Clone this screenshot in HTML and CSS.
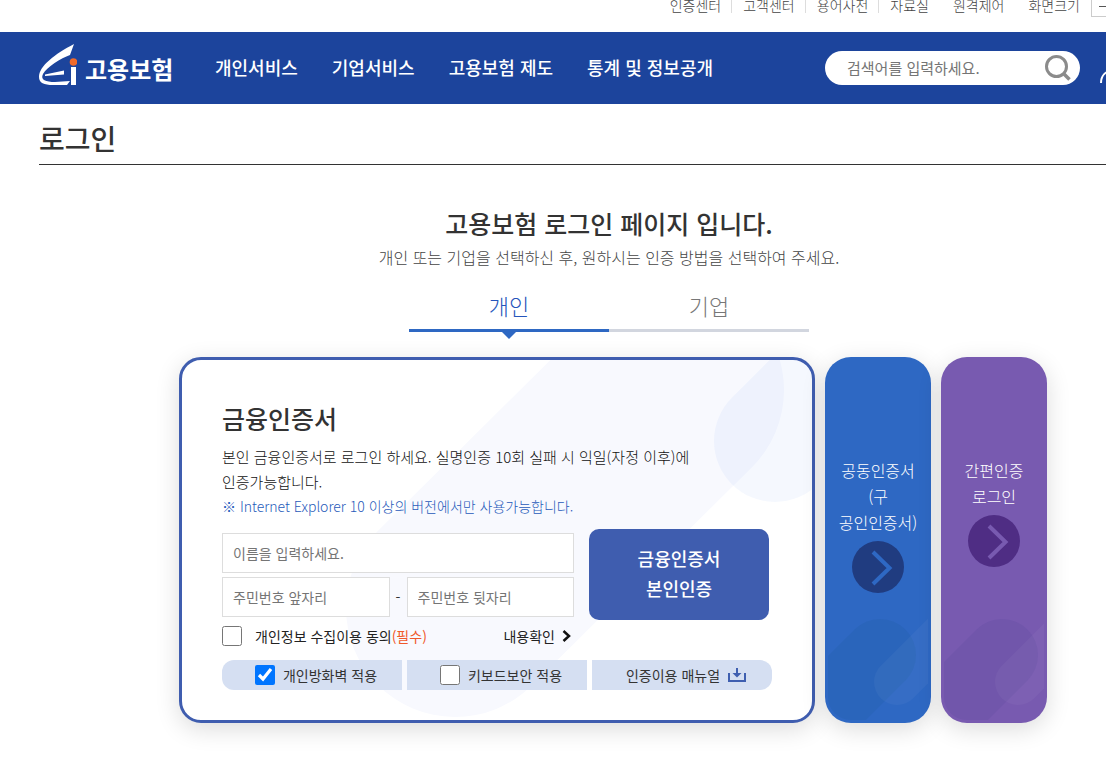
FILE: index.html
```
<!doctype html>
<html lang="ko">

<head>
	<meta charset="UTF-8">
	<title>로그인 - 고용보험</title>
	<link rel="stylesheet" href="styles.css">
</head>

<body>
	<div class="util">
		<div class="inner">
			<ul class="util_list">
				<li><a href="#">인증센터</a></li>
				<li><a href="#">고객센터</a></li>
				<li><a href="#">용어사전</a></li>
				<li><a href="#">자료실</a></li>
			</ul>
			<a href="#" class="remote">원격제어</a>
			<span class="size_label">화면크기</span>
			<button type="button" class="size_btn" aria-label="축소">
				<svg width="10" height="10" viewBox="0 0 10 10"><path d="M1 5.500h8" stroke="#555" /></svg>
			</button>
		</div>
	</div>

	<header class="header">
		<div class="inner">
			<a href="#" class="logo">
				<svg width="38" height="42" viewBox="0 0 38 42" aria-hidden="true">
					<path fill="#fff" d="M35 0L31 11C22 14 8 23 4 30C1 36 7 38 16 38L31 37L28 41L14 41C5 41 0 39 0 33C0 22 16 10 35 0Z" />
					<path fill="#fff" d="M6 30.500L25 26.500V30.500L6 32Z" />
					<path fill="#fff" d="M32 23h5v18h-5z" />
					<circle cx="34.500" cy="18" r="3.800" fill="#f06a2a" />
				</svg>
				<span>고용보험</span>
			</a>
			<nav class="gnb">
				<a href="#">개인서비스</a>
				<a href="#">기업서비스</a>
				<a href="#">고용보험 제도</a>
				<a href="#">통계 및 정보공개</a>
			</nav>
			<form class="search">
				<input type="text" placeholder="검색어를 입력하세요." aria-label="검색어">
				<button type="submit" aria-label="검색">
					<svg width="26" height="26" viewBox="0 0 26 26" fill="none" stroke="#8b8b8b">
						<circle cx="11.500" cy="11.500" r="10" stroke-width="3" />
						<path d="M18.500 18.500L24.500 24.500" stroke-width="3.500" />
					</svg>
				</button>
			</form>
			<a href="#" class="user" aria-label="로그인">
				<svg width="26" height="26" viewBox="0 0 26 26" fill="none" stroke="#fff" stroke-width="2">
					<circle cx="13" cy="6" r="5" />
					<path d="M1 25C1 18 5 13 13 13S25 18 25 25" />
				</svg>
			</a>
		</div>
	</header>

	<main class="inner">
		<h1>로그인</h1>
		<div class="intro">
			<h2>고용보험 로그인 페이지 입니다.</h2>
			<p>개인 또는 기업을 선택하신 후, 원하시는 인증 방법을 선택하여 주세요.</p>
		</div>
		<div class="tabs">
			<button type="button" class="tab on">개인</button>
			<button type="button" class="tab">기업</button>
		</div>

		<div class="login">
			<section class="card">
				<svg class="card_bg" viewBox="0 0 630 360" preserveAspectRatio="xMinYMin slice" fill="none" stroke-linecap="round" aria-hidden="true">
					<path d="M273 248L493 30" stroke="#f8f9fe" stroke-width="218" />
					<path d="M593 81L793 -119" stroke="#5a8cf0" stroke-opacity=".06" stroke-width="122" />
				</svg>
				<h3>금융인증서</h3>
				<p class="desc">본인 금융인증서로 로그인 하세요. 실명인증 10회 실패 시 익일(자정 이후)에<br>인증가능합니다.</p>
				<p class="notice">※ Internet Explorer 10 이상의 버전에서만 사용가능합니다.</p>
				<form>
					<div class="fields">
						<div class="inputs">
							<input type="text" placeholder="이름을 입력하세요." aria-label="이름">
							<div class="jumin">
								<input type="text" placeholder="주민번호 앞자리" aria-label="주민번호 앞자리">
								<span>-</span>
								<input type="password" placeholder="주민번호 뒷자리" aria-label="주민번호 뒷자리">
							</div>
						</div>
						<button type="submit" class="cert_btn">금융인증서<br>본인인증</button>
					</div>
					<div class="agree">
						<input type="checkbox" id="agree">
						<label for="agree">개인정보 수집이용 동의<em>(필수)</em></label>
						<a href="#">내용확인
							<svg width="10" height="12" viewBox="0 0 10 12"><path d="M1.500 1L7 6L1.500 11" fill="none" stroke="#111" stroke-width="2.500" /></svg>
						</a>
					</div>
					<div class="options">
						<div class="option">
							<input type="checkbox" id="firewall" checked>
							<label for="firewall">개인방화벽 적용</label>
						</div>
						<div class="option">
							<input type="checkbox" id="keyboard">
							<label for="keyboard">키보드보안 적용</label>
						</div>
						<a href="#" class="option">인증이용 매뉴얼
							<svg width="18" height="14" viewBox="0 0 18 14"><path d="M1 5v8h16V5M9 0v7" fill="none" stroke="#3f5fb0" stroke-width="2" /><path d="M4.500 5h9L9 9.500z" fill="#3f5fb0" /></svg>
						</a>
					</div>
				</form>
			</section>

			<button type="button" class="side blue">
				<svg class="side_bg" width="100" height="110" viewBox="0 0 100 110" fill="none" stroke-linecap="round" aria-hidden="true">
					<path d="M52 45L-48 145" stroke="#1f5a9a" stroke-opacity=".2" stroke-width="72" />
					<path d="M69 72L169 -28" stroke="#fff" stroke-opacity=".04" stroke-width="46" />
				</svg>
				<span>공동인증서<br>(구<br>공인인증서)</span>
				<svg width="52" height="52" viewBox="0 0 52 52" aria-hidden="true">
					<circle cx="26" cy="26" r="26" fill="#203c80" />
					<path d="M21 11L37.500 27L21 43" fill="none" stroke="#2e68c3" stroke-width="4" />
				</svg>
			</button>
			<button type="button" class="side purple">
				<svg class="side_bg" width="100" height="110" viewBox="0 0 100 110" fill="none" stroke-linecap="round" aria-hidden="true">
					<path d="M58 45L-42 145" stroke="#54489a" stroke-opacity=".2" stroke-width="72" />
					<path d="M74 72L174 -28" stroke="#fff" stroke-opacity=".04" stroke-width="46" />
				</svg>
				<span>간편인증<br>로그인</span>
				<svg width="52" height="52" viewBox="0 0 52 52" aria-hidden="true">
					<circle cx="26" cy="26" r="26" fill="#4f2d84" />
					<path d="M21 11L37.500 27L21 43" fill="none" stroke="#785ab0" stroke-width="4" />
				</svg>
			</button>
		</div>
	</main>
</body>

</html>
```
FILE: styles.css
```
* {
	margin: 0;
	padding: 0;
	box-sizing: border-box;
}

body {
	font-family: "Noto Sans CJK KR", "Noto Sans", sans-serif;
	font-size: 14px;
	color: #333;
	background: #fff;
	overflow-x: hidden;
}

ul {
	list-style: none;
}

a {
	color: inherit;
	text-decoration: none;
}

em {
	font-style: normal;
}

button,
input {
	font-family: inherit;
	font-size: 14px;
}

button {
	border: 0;
	background: none;
	cursor: pointer;
}

svg {
	display: block;
	flex-shrink: 0;
}

.inner {
	min-width: 1140px;
	margin: 0 39px;
}

/* 상단 유틸 메뉴 */
.util {
	height: 32px;
	overflow: hidden;
	color: #444;
	font-weight: 300;
}

.util .inner {
	display: flex;
	justify-content: flex-end;
	padding-right: 64px;
	line-height: 10px;
}

.util_list {
	display: flex;
}

.util_list li {
	height: 13px;
	padding: 0 10px 0 11px;
	border-right: 1px solid #ddd;
}

.util_list li:last-child {
	border-right: 0;
}

.remote {
	margin: 0 24px 0 14px;
}

.size_btn {
	display: flex;
	justify-content: center;
	width: 24px;
	height: 17px;
	margin-left: 11px;
	padding-top: 1px;
	border: 1px solid #ccc;
	border-top: 0;
}

/* 헤더 */
.header {
	background: #1c449c;
}

.header .inner {
	display: flex;
	align-items: center;
	height: 72px;
}

.logo {
	display: flex;
	align-items: center;
	gap: 8px;
	width: 176px;
	padding-bottom: 6px;
	color: #fff;
}

.logo span {
	padding-top: 8px;
	font-size: 24px;
	font-weight: 700;
	line-height: 32px;
}

.gnb {
	display: flex;
	gap: 34px;
	padding-bottom: 2px;
	color: #fff;
	font-size: 18px;
	font-weight: 500;
	line-height: 28px;
}

.search {
	display: flex;
	align-items: center;
	width: 255px;
	height: 34px;
	margin-left: auto;
	padding: 0 9px 0 22px;
	border-radius: 17px;
	background: #fff;
}

.search input {
	flex: 1;
	min-width: 0;
	padding-bottom: 2px;
	border: 0;
	outline: 0;
	background: none;
	font-size: 15px;
}

.user {
	margin: 6px 53px 0 20px;
}

/* 본문 */
h1 {
	height: 61px;
	border-bottom: 1px solid #333;
	font-size: 28px;
	font-weight: 500;
	line-height: 68px;
}

.intro {
	padding-top: 40px;
	text-align: center;
}

.intro h2 {
	font-size: 25px;
	font-weight: 500;
	line-height: 36px;
}

.intro p {
	font-size: 16px;
	font-weight: 300;
	line-height: 32px;
	color: #444;
}

.tabs {
	display: flex;
	justify-content: center;
	padding-top: 15px;
}

.tab {
	position: relative;
	width: 200px;
	height: 44px;
	padding-bottom: 8px;
	border-bottom: 3px solid #d2d6df;
	color: #777;
	font-size: 22px;
	font-weight: 300;
}

.tab.on {
	border-color: #2e68c3;
	color: #2555bb;
}

.tab.on::after {
	content: "";
	position: absolute;
	top: 100%;
	left: 50%;
	margin: 2px 0 0 -8px;
	border: 8px solid transparent;
	border-top-color: #2e68c3;
	border-bottom: 0;
}

.login {
	display: flex;
	justify-content: center;
	gap: 10px;
	padding: 25px 0 42px 8px;
}

/* 금융인증서 */
.card {
	position: relative;
	width: 636px;
	padding: 38px 40px 30px;
	border: 3px solid #3f5daf;
	border-radius: 22px;
	background: #fff;
	box-shadow: 0 6px 24px rgba(0, 0, 0, .14);
}

.card_bg {
	position: absolute;
	top: 0;
	left: 0;
	width: 100%;
	height: 100%;
	border-radius: 19px;
}

.card h3,
.card p,
.card form {
	position: relative;
}

.card h3 {
	margin-bottom: 6px;
	font-size: 25px;
	font-weight: 500;
	line-height: 40px;
}

.card p {
	line-height: 25px;
}

.card .desc {
	color: #111;
	font-size: 15px;
	font-weight: 300;
}

.card .notice {
	color: #1f5aba;
	font-weight: 300;
}

.fields {
	display: flex;
	align-items: flex-start;
	gap: 15px;
	padding-top: 10px;
}

.inputs {
	width: 352px;
	padding-top: 4px;
}

.inputs input {
	width: 100%;
	height: 40px;
	padding: 0 10px;
	border: 1px solid #ddd;
	background: #fff;
}

.jumin {
	display: flex;
	align-items: center;
	margin-top: 4px;
}

.jumin input {
	flex: 1;
	min-width: 0;
}

.jumin span {
	width: 17px;
	text-align: center;
}

.cert_btn {
	width: 180px;
	height: 91px;
	padding-bottom: 3px;
	border-radius: 10px;
	background: #3f5daf;
	color: #fff;
	font-size: 18px;
	font-weight: 500;
	line-height: 30px;
}

input[type="checkbox"] {
	width: 20px;
	height: 20px;
}

.agree {
	display: flex;
	align-items: center;
	width: 352px;
	height: 20px;
	margin: 6px 0 14px;
	color: #222;
}

.agree label {
	margin-left: 13px;
}

.agree em {
	color: #f0592a;
}

.agree a {
	display: flex;
	align-items: center;
	gap: 7px;
	margin-left: auto;
	padding-right: 2px;
}

.options {
	display: flex;
	gap: 5px;
}

.option {
	display: flex;
	align-items: center;
	justify-content: center;
	gap: 8px;
	width: 180px;
	height: 30px;
	padding-left: 8px;
	background: #d5dff2;
}

.option:first-child {
	border-radius: 12px 0 0 12px;
}

.option:last-child {
	border-radius: 0 12px 12px 0;
}

/* 다른 인증 방법 */
.side {
	position: relative;
	display: flex;
	flex-direction: column;
	align-items: center;
	gap: 6px;
	width: 106px;
	padding-top: 100px;
	border-radius: 26px;
	color: #fff;
	font-size: 16px;
	font-weight: 300;
	line-height: 26px;
	box-shadow: 0 6px 24px rgba(0, 0, 0, .14);
}

.side_bg {
	position: absolute;
	left: 3px;
	bottom: 3px;
	border-radius: 0 0 23px 23px;
}

.blue {
	background: #2e68c3;
}

.purple {
	background: #785ab0;
}
```
